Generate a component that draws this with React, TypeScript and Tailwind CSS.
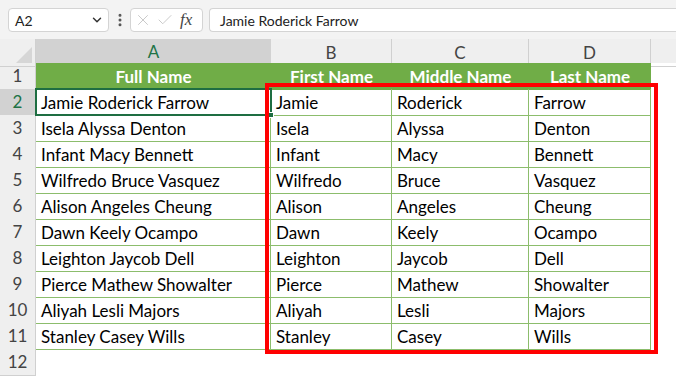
import React from 'react';
import { ChevronDown, EllipsisVertical, X, Check } from 'lucide-react';

const rows: [string, string, string, string][] = [
  ['Jamie Roderick Farrow', 'Jamie', 'Roderick', 'Farrow'],
  ['Isela Alyssa Denton', 'Isela', 'Alyssa', 'Denton'],
  ['Infant Macy Bennett', 'Infant', 'Macy', 'Bennett'],
  ['Wilfredo Bruce Vasquez', 'Wilfredo', 'Bruce', 'Vasquez'],
  ['Alison Angeles Cheung', 'Alison', 'Angeles', 'Cheung'],
  ['Dawn Keely Ocampo', 'Dawn', 'Keely', 'Ocampo'],
  ['Leighton Jaycob Dell', 'Leighton', 'Jaycob', 'Dell'],
  ['Pierce Mathew Showalter', 'Pierce', 'Mathew', 'Showalter'],
  ['Aliyah Lesli Majors', 'Aliyah', 'Lesli', 'Majors'],
  ['Stanley Casey Wills', 'Stanley', 'Casey', 'Wills'],
];

const font = { fontFamily: 'Lato, "Open Sans", sans-serif' };
const cols = 'grid grid-cols-[36px_235px_121px_137px_122px_1fr]';

const FormulaBar = () => (
  <div className="h-[39px] bg-[#f3f3f3] flex items-center pl-[8px] pt-[1px]">
    <div className="w-[101px] h-[24px] bg-white border border-[#d4d4d4] rounded-[4px] flex items-center justify-between pl-[6px] pr-[4px] text-[14px] text-[#222]">
      A2
      <ChevronDown size={14} strokeWidth={2.5} className="text-[#333]" />
    </div>
    <div className="w-[21px] flex justify-center">
      <EllipsisVertical size={16} strokeWidth={2.5} className="text-[#555]" />
    </div>
    <div className="w-[73px] h-[24px] bg-white border border-[#d4d4d4] rounded-[4px] flex items-center gap-[4px] pl-[3px]">
      <X size={18} strokeWidth={1.2} className="text-[#c4c4c4]" />
      <Check size={18} strokeWidth={1.2} className="text-[#c4c4c4]" />
      <span className="text-[17px] italic text-[#444] ml-[2px]" style={{ fontFamily: '"Liberation Serif", serif' }}>fx</span>
    </div>
    <div className="flex-1 h-[24px] bg-white border border-[#d4d4d4] border-r-0 rounded-l-[4px] flex items-center pl-[10px] text-[14px] text-[#222] ml-[6px]">
      Jamie Roderick Farrow
    </div>
  </div>
);

export default function App() {
  return (
    <div className="w-[676px] h-[379px] overflow-hidden bg-white relative text-black" style={font}>
      <FormulaBar />
      {/* column headers */}
      <div className={`${cols} h-[24px] bg-[#efefef] text-[17px] text-[#444]`}>
        <div className="relative border-r border-b border-[#d0d0d0]">
          <div className="absolute right-[3px] bottom-[3px] w-0 h-0 border-l-[16px] border-l-transparent border-b-[16px] border-b-[#d6d6d6]" />
        </div>
        <div className="bg-[#d2d2d2] border-b-2 border-[#217346] text-[#217346] flex items-center justify-center">A</div>
        <div className="border-r border-b border-[#d0d0d0] flex items-center justify-center">B</div>
        <div className="border-r border-b border-[#d0d0d0] flex items-center justify-center">C</div>
        <div className="border-r border-b border-[#d0d0d0] flex items-center justify-center">D</div>
        <div className="border-b border-[#d0d0d0]" />
      </div>
      {/* title row */}
      <div className={`${cols} h-[26px] text-[17px]`}>
        <div className="bg-[#efefef] border-r border-b border-[#d0d0d0] text-[#444] flex items-center justify-center">1</div>
        {['Full Name', 'First Name', 'Middle Name', 'Last Name'].map((h) => (
          <div key={h} className="bg-[#70ad47] text-white font-bold flex items-center justify-center pt-[1px]">{h}</div>
        ))}
        <div />
      </div>
      {rows.map((r, i) => (
        <div key={i} className={`${cols} h-[26px] text-[17px]`}>
          <div className={`border-r border-b border-[#d0d0d0] flex items-center justify-center ${i === 0 ? 'bg-[#d2d2d2] text-[#217346]' : 'bg-[#efefef] text-[#444]'}`}>{i + 2}</div>
          {r.map((c, j) => (
            <div key={j} className="border-r border-b border-[#8cbd6c] flex items-center pl-[5px] pt-[1px] whitespace-nowrap overflow-hidden">{c}</div>
          ))}
          <div />
        </div>
      ))}
      <div className={`${cols} h-[26px] text-[17px]`}>
        <div className="bg-[#efefef] border-r border-b border-[#d0d0d0] text-[#444] flex items-center justify-center">12</div>
      </div>
      {/* active cell A2 */}
      <div className="absolute left-[35px] top-[88px] w-[237px] h-[28px] border-2 border-[#1e6e42]">
        <div className="absolute -right-[4px] -bottom-[4px] w-[6px] h-[6px] bg-[#1e6e42] border border-white" />
      </div>
      {/* highlight box */}
      <div className="absolute left-[265px] top-[83px] w-[393px] h-[271px] border-[4px] border-[#ff0000]" />
    </div>
  );
}
